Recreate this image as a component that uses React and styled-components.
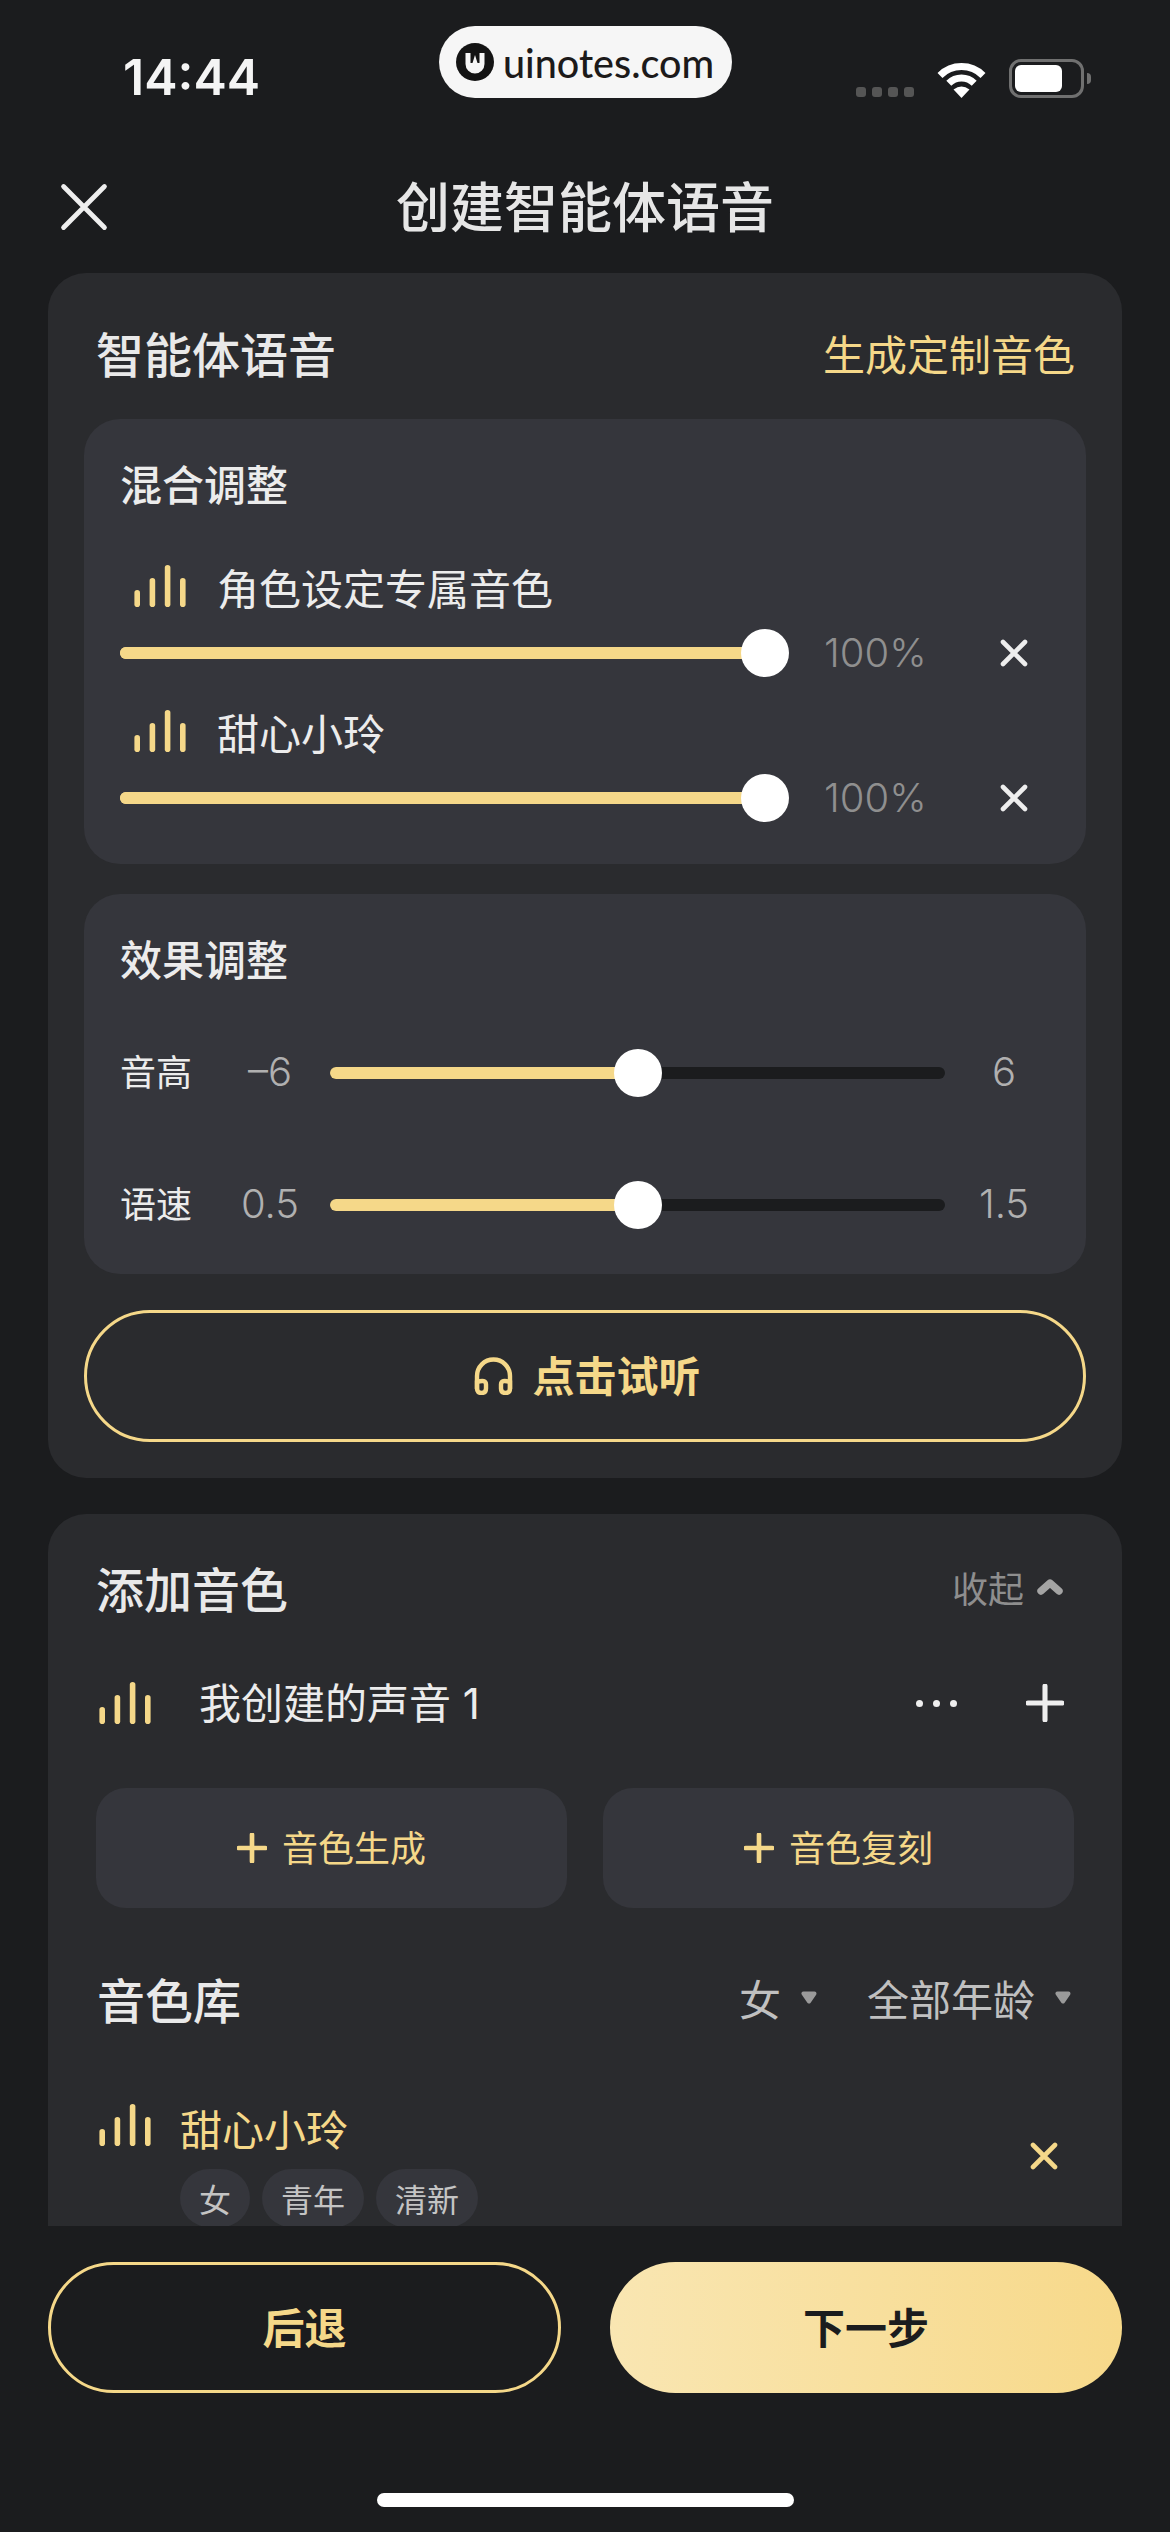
import styled, { createGlobalStyle } from 'styled-components'

const GOLD = '#f5d889'

const GlobalStyle = createGlobalStyle`
  html, body {
    margin: 0;
    padding: 0;
    background: #1b1c1e;
  }
  * {
    box-sizing: border-box;
  }
`

function VoiceBars () {
  return (
    <BarsSvg viewBox='0 0 52 42'>
      <rect x='0.4' y='25' width='5.6' height='17' rx='2.8' />
      <rect x='15.6' y='13' width='5.6' height='29' rx='2.8' />
      <rect x='30.8' y='0' width='5.6' height='42' rx='2.8' />
      <rect x='46' y='13' width='5.6' height='29' rx='2.8' />
    </BarsSvg>
  )
}

function Cross ({ size, color, weight }) {
  return (
    <svg width={size} height={size} viewBox='0 0 28 28' fill='none'>
      <path d='M3 3 L25 25 M25 3 L3 25' stroke={color} strokeWidth={weight} strokeLinecap='round' />
    </svg>
  )
}

function Plus ({ size, color, weight }) {
  return (
    <svg width={size} height={size} viewBox='0 0 36 36' fill='none'>
      <path d='M18 2 V34 M2 18 H34' stroke={color} strokeWidth={weight} strokeLinecap='round' />
    </svg>
  )
}

function Caret () {
  return (
    <svg width='16' height='13' viewBox='0 0 16 13'>
      <path d='M2.5 2.5 H13.5 L8 10.5 Z' fill='#9a9a9a' stroke='#9a9a9a' strokeWidth='4' strokeLinejoin='round' />
    </svg>
  )
}

function Slider ({ value, $dark }) {
  return (
    <Track $dark={$dark}>
      <Fill style={{ width: `${value}%` }} />
      <Thumb style={{ left: `${value}%` }} />
    </Track>
  )
}

function MixItem ({ name, value }) {
  return (
    <MixBlock>
      <MixName>
        <VoiceBars />
        <span>{name}</span>
      </MixName>
      <MixControl>
        <MixTrack>
          <Slider value={value} />
        </MixTrack>
        <Percent>{value}%</Percent>
        <RemoveMix>
          <Cross size={28} color='#eeeeee' weight={4.6} />
        </RemoveMix>
      </MixControl>
    </MixBlock>
  )
}

function EffectRow ({ label, min, max }) {
  return (
    <EffectLine>
      <EffectLabel>{label}</EffectLabel>
      <EffectValue>{min}</EffectValue>
      <EffectTrack>
        <Slider value={50} $dark />
      </EffectTrack>
      <EffectValue>{max}</EffectValue>
    </EffectLine>
  )
}

export default function App () {
  return (
    <Screen>
      <GlobalStyle />
      <StatusBar>
        <Time>14:44</Time>
        <Watermark>
          <svg width='38' height='38' viewBox='0 0 38 38'>
            <circle cx='19' cy='19' r='19' fill='#141414' />
            <path d='M9.5 10 H14.5 V20 H16.5 L19 12 L21.5 20 H23.5 V10 H28.5 V21 A9.5 9.5 0 0 1 9.5 21 Z' fill='#f6f6f6' />
          </svg>
          <WatermarkText>uinotes.com</WatermarkText>
        </Watermark>
        <StatusIcons>
          <SignalDots>
            <i /><i /><i /><i />
          </SignalDots>
          <svg width='49' height='37' viewBox='0 0 49 37' fill='none'>
            <path d='M3 14.5 A30.4 30.4 0 0 1 46 14.5' stroke='#fff' strokeWidth='7' />
            <path d='M11.8 22.3 A18 18 0 0 1 37.2 22.3' stroke='#fff' strokeWidth='7' />
            <path d='M24.5 37 L16.5 28.5 Q24.5 22.5 32.5 28.5 Z' fill='#fff' />
          </svg>
          <Battery>
            <BatteryFill />
          </Battery>
        </StatusIcons>
      </StatusBar>

      <Header>
        <CloseButton>
          <Cross size={52} color='#eeeeee' weight={2.6} />
        </CloseButton>
        <PageTitle>创建智能体语音</PageTitle>
      </Header>

      <Scroll>
        <Card>
          <CardHead>
            <CardTitle>智能体语音</CardTitle>
            <GoldLink>生成定制音色</GoldLink>
          </CardHead>

          <Panel>
            <PanelTitle>混合调整</PanelTitle>
            <MixItem name='角色设定专属音色' value={100} />
            <MixItem name='甜心小玲' value={100} />
          </Panel>

          <Panel $second>
            <PanelTitle>效果调整</PanelTitle>
            <EffectRows>
              <EffectRow label='音高' min='–6' max='6' />
              <EffectRow label='语速' min='0.5' max='1.5' />
            </EffectRows>
          </Panel>

          <ListenButton>
            <svg width='39' height='38' viewBox='0 0 39 38' fill='none'>
              <path d='M3 32 V19 A16.5 16.5 0 0 1 36 19 V32' stroke={GOLD} strokeWidth='4.4' />
              <path d='M3 25 Q12 22 12 27.5 V31.5 Q12 36 7.5 36 Q3 36 3 31.5 Z' stroke={GOLD} strokeWidth='4.4' />
              <path d='M36 25 Q27 22 27 27.5 V31.5 Q27 36 31.5 36 Q36 36 36 31.5 Z' stroke={GOLD} strokeWidth='4.4' />
            </svg>
            <span>点击试听</span>
          </ListenButton>
        </Card>

        <AddCard>
          <AddHead>
            <CardTitle>添加音色</CardTitle>
            <Collapse>
              <span>收起</span>
              <svg width='26' height='16' viewBox='0 0 26 16' fill='none'>
                <path d='M4 12 L13 4 L22 12' stroke='#a4a4a4' strokeWidth='7.4' strokeLinecap='round' strokeLinejoin='round' />
              </svg>
            </Collapse>
          </AddHead>

          <MyVoice>
            <VoiceBars />
            <MyVoiceName>我创建的声音 1</MyVoiceName>
            <MoreDots>
              <i /><i /><i />
            </MoreDots>
            <Plus size={38} color='#eeeeee' weight={4.8} />
          </MyVoice>

          <AddButtons>
            <AddButton>
              <Plus size={30} color={GOLD} weight={5.6} />
              <span>音色生成</span>
            </AddButton>
            <AddButton>
              <Plus size={30} color={GOLD} weight={5.6} />
              <span>音色复刻</span>
            </AddButton>
          </AddButtons>

          <LibraryHead>
            <CardTitle>音色库</CardTitle>
            <Filter $wide>
              <span>女</span>
              <Caret />
            </Filter>
            <Filter>
              <span>全部年龄</span>
              <Caret />
            </Filter>
          </LibraryHead>

          <LibraryItem>
            <VoiceBars />
            <ItemBody>
              <ItemName>甜心小玲</ItemName>
              <Tags>
                <Tag>女</Tag>
                <Tag>青年</Tag>
                <Tag>清新</Tag>
              </Tags>
            </ItemBody>
            <ItemRemove>
              <Cross size={28} color={GOLD} weight={4.6} />
            </ItemRemove>
          </LibraryItem>
        </AddCard>
      </Scroll>

      <Footer>
        <BackButton>后退</BackButton>
        <NextButton>下一步</NextButton>
      </Footer>
      <HomeBar />
    </Screen>
  )
}

const Screen = styled.div`
  position: relative;
  width: 1170px;
  height: 2532px;
  display: flex;
  flex-direction: column;
  overflow: hidden;
  background: #1b1c1e;
  color: #e8e8e8;
  font-family: Inter, "Noto Sans CJK SC", sans-serif;
`

const StatusBar = styled.div`
  flex: 0 0 157px;
  display: flex;
  align-items: center;
  justify-content: space-between;
  padding: 0 86px 0 123px;
`

const Time = styled.div`
  padding-bottom: 4px;
  font-size: 50px;
  font-weight: 600;
  color: #f4f4f4;
`

const Watermark = styled.div`
  position: absolute;
  left: 439px;
  top: 26px;
  width: 293px;
  height: 72px;
  display: flex;
  align-items: center;
  gap: 9px;
  padding-left: 17px;
  border-radius: 36px;
  background: #f6f6f6;
`

const WatermarkText = styled.span`
  font-family: Lato, sans-serif;
  font-size: 39.5px;
  font-weight: 500;
  color: #1c1a1a;
`

const StatusIcons = styled.div`
  display: flex;
  align-items: flex-end;
  gap: 23px;
`

const SignalDots = styled.div`
  display: flex;
  gap: 6px;
  padding-bottom: 1px;

  i {
    width: 10px;
    height: 10px;
    border-radius: 3px;
    background: #555555;
  }
`

const Battery = styled.div`
  position: relative;
  width: 75px;
  height: 39px;
  padding: 3px;
  border: 3px solid #707070;
  border-radius: 12px;

  &::after {
    content: '';
    position: absolute;
    right: -10px;
    top: 11px;
    width: 4px;
    height: 11px;
    border-radius: 0 4px 4px 0;
    background: #707070;
  }
`

const BatteryFill = styled.div`
  width: 47px;
  height: 27px;
  border-radius: 6px;
  background: #ffffff;
`

const Header = styled.div`
  position: relative;
  flex: 0 0 100px;
  display: flex;
  align-items: center;
  justify-content: center;
`

const CloseButton = styled.div`
  position: absolute;
  left: 58px;
  top: 24px;
  display: flex;
`

const PageTitle = styled.div`
  padding-bottom: 6px;
  font-size: 54px;
  font-weight: 500;
  color: #e6e6e6;
`

const Scroll = styled.div`
  flex: 0 0 1969px;
  min-height: 0;
  overflow: hidden;
  padding: 16px 48px 0;
`

const Card = styled.div`
  border-radius: 38px;
  background: #2a2b2e;
  padding: 0 36px 36px;
`

const AddCard = styled.div`
  margin-top: 36px;
  border-radius: 38px;
  background: #2a2b2e;
  padding: 0 48px 36px;
`

const CardHead = styled.div`
  height: 146px;
  display: flex;
  align-items: center;
  justify-content: space-between;
  padding: 12px 11px 0 12px;
`

const CardTitle = styled.div`
  font-size: 48px;
  font-weight: 500;
  color: #e9e9e9;
`

const GoldLink = styled.div`
  font-size: 42px;
  color: ${GOLD};
`

const Panel = styled.div`
  margin-top: ${p => (p.$second ? '30px' : '0')};
  padding: 0 36px ${p => (p.$second ? '39px' : '40px')};
  border-radius: 36px;
  background: #35363c;
`

const PanelTitle = styled.div`
  height: 132px;
  display: flex;
  align-items: center;
  padding-bottom: 6px;
  font-size: 42px;
  font-weight: 500;
  color: #ececec;
`

const MixBlock = styled.div`
  & + & {
    margin-top: 17px;
  }
`

const MixName = styled.div`
  height: 76px;
  display: flex;
  align-items: center;
  gap: 31px;
  padding: 0 0 6px 14px;
  font-size: 42px;
  color: #ececec;
`

const BarsSvg = styled.svg`
  flex: none;
  width: 52px;
  height: 42px;
  fill: ${GOLD};
`

const MixControl = styled.div`
  height: 52px;
  display: flex;
  align-items: center;
`

const MixTrack = styled.div`
  flex: none;
  width: 645px;
`

const Track = styled.div`
  position: relative;
  width: 100%;
  height: 12px;
  border-radius: 6px;
  background: ${p => (p.$dark ? '#1b1c1e' : GOLD)};
`

const Fill = styled.div`
  height: 100%;
  border-radius: 6px;
  background: ${GOLD};
`

const Thumb = styled.div`
  position: absolute;
  top: 50%;
  width: 48px;
  height: 48px;
  border-radius: 50%;
  background: #ffffff;
  transform: translate(-50%, -50%);
`

const Percent = styled.div`
  flex: none;
  margin-left: 59px;
  width: 176px;
  padding-bottom: 2px;
  font-size: 40px;
  font-weight: 300;
  color: #8f8f8f;
`

const RemoveMix = styled.div`
  flex: none;
  display: flex;
`

const EffectRows = styled.div`
  display: flex;
  flex-direction: column;
  gap: 72px;
  padding-top: 17px;
`

const EffectLine = styled.div`
  height: 60px;
  display: grid;
  grid-template-columns: 105px 90px 630px 118px;
  align-items: center;
`

const EffectLabel = styled.div`
  padding-bottom: 6px;
  font-size: 36px;
  color: #ececec;
`

const EffectValue = styled.div`
  padding-bottom: 4px;
  text-align: center;
  font-size: 40px;
  font-weight: 300;
  color: #b0b0b0;
`

const EffectTrack = styled.div`
  margin-left: 15px;
  width: 615px;
`

const ListenButton = styled.div`
  margin-top: 36px;
  height: 132px;
  display: flex;
  align-items: center;
  justify-content: center;
  gap: 19px;
  padding: 0 0 0 5px;
  border: 3px solid ${GOLD};
  border-radius: 66px;
  font-size: 42px;
  font-weight: 600;
  color: ${GOLD};

  span {
    margin-top: -6px;
  }
`

const AddHead = styled.div`
  height: 154px;
  display: flex;
  align-items: center;
  justify-content: space-between;
  padding: 0 11px 8px 0;
`

const Collapse = styled.div`
  display: flex;
  align-items: center;
  gap: 13px;
  font-size: 36px;
  color: #8e8e8e;
`

const MyVoice = styled.div`
  height: 70px;
  display: flex;
  align-items: center;
  padding: 0 10px 0 3px;
  font-size: 42px;
`

const MyVoiceName = styled.div`
  margin: -6px 0 0 48px;
  color: #ececec;
`

const MoreDots = styled.div`
  margin-left: auto;
  margin-right: 69px;
  display: flex;
  gap: 10px;

  i {
    width: 7px;
    height: 7px;
    border-radius: 50%;
    background: #eeeeee;
  }
`

const AddButtons = styled.div`
  margin-top: 50px;
  display: grid;
  grid-template-columns: 471px 471px;
  gap: 36px;
`

const AddButton = styled.div`
  height: 120px;
  display: flex;
  align-items: center;
  justify-content: center;
  gap: 15px;
  border-radius: 30px;
  background: #35363c;
  font-size: 36px;
  color: ${GOLD};

  span {
    margin-top: -4px;
  }
`

const LibraryHead = styled.div`
  margin-top: 40px;
  height: 104px;
  display: flex;
  align-items: center;
  padding: 0 3px 5px 1px;

  & > :first-child {
    margin-right: auto;
  }
`

const Filter = styled.div`
  display: flex;
  align-items: center;
  gap: 20px;
  margin-right: ${p => (p.$wide ? '50px' : '0')};
  font-size: 42px;
  color: #c0c0c0;
`

const LibraryItem = styled.div`
  margin-top: 48px;
  display: flex;
  padding: 0 16px 0 3px;

  ${BarsSvg} {
    margin-top: 4px;
  }
`

const ItemBody = styled.div`
  margin-left: 29px;
`

const ItemName = styled.div`
  height: 60px;
  display: flex;
  align-items: center;
  padding-bottom: 6px;
  font-size: 42px;
  color: ${GOLD};
`

const Tags = styled.div`
  margin-top: 9px;
  display: flex;
  gap: 12px;
`

const Tag = styled.div`
  height: 58px;
  display: flex;
  align-items: center;
  padding: 0 19px;
  border-radius: 29px;
  background: #35363c;
  font-size: 32px;
  color: #c4c4c4;
`

const ItemRemove = styled.div`
  margin-left: auto;
  margin-top: 42px;
  display: flex;
`

const Footer = styled.div`
  display: grid;
  grid-template-columns: 513px 512px;
  gap: 49px;
  padding: 36px 48px 0;
`

const BackButton = styled.div`
  height: 131px;
  display: flex;
  align-items: center;
  justify-content: center;
  padding-bottom: 4px;
  border: 3px solid ${GOLD};
  border-radius: 66px;
  font-size: 42px;
  font-weight: 600;
  color: ${GOLD};
`

const NextButton = styled.div`
  height: 131px;
  display: flex;
  align-items: center;
  justify-content: center;
  padding-bottom: 4px;
  border-radius: 66px;
  background: linear-gradient(90deg, #f9e6b2, #f7d98a);
  font-size: 42px;
  font-weight: 600;
  color: #1b1c1e;
`

const HomeBar = styled.div`
  margin: 100px auto 0;
  width: 417px;
  height: 14px;
  border-radius: 7px;
  background: #ffffff;
`
